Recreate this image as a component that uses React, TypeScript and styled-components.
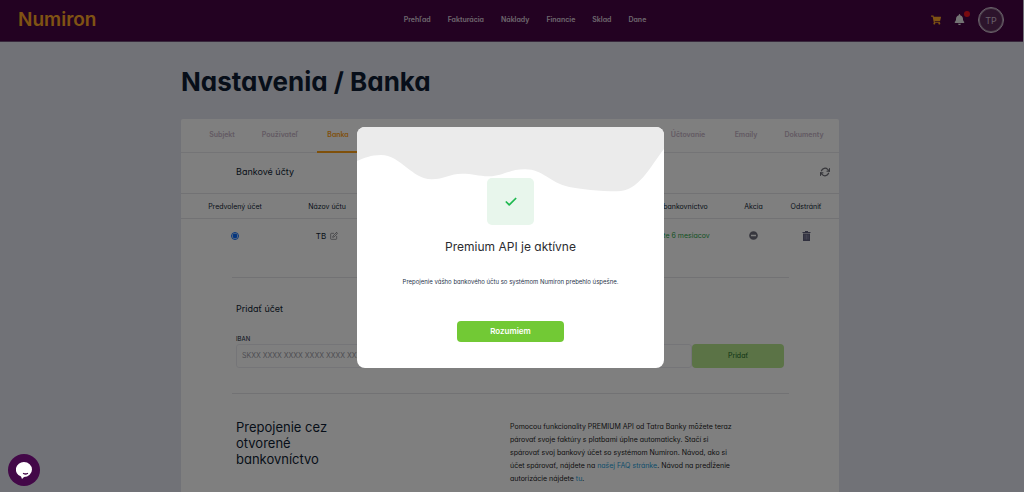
import React from "react";
import styled, { createGlobalStyle } from "styled-components";
import { FaShoppingCart, FaBell, FaMinusCircle } from "react-icons/fa";
import { FiCheck, FiRefreshCw, FiEdit } from "react-icons/fi";

const GlobalStyle = createGlobalStyle`
  *, *::before, *::after { box-sizing: border-box; }
  body {
    margin: 0;
    background: #e2e4ee;
    color: #0f1d33;
    font-family: Inter, "Liberation Sans", sans-serif;
    font-feature-settings: "cv11" 1;
    font-size: 7px;
  }
  button, input { font: inherit; font-feature-settings: inherit; color: inherit; }
  h1, h2, h3, p { margin: 0; font-weight: 400; }
  a { text-decoration: none; color: inherit; }
`;

const Page = styled.div`
  min-height: 100vh;
  display: flex;
  flex-direction: column;
`;

const Header = styled.header`
  display: grid;
  grid-template-columns: 1fr auto 1fr;
  align-items: center;
  height: 42px;
  margin-right: 1px;
  padding: 0 19px 2px 18px;
  background: #460444;
  border-bottom: 1px solid #705078;
`;

const Logo = styled.a`
  color: #ffa726;
  font-size: 19px;
  line-height: 24px;
  font-weight: 600;
`;

const Nav = styled.nav`
  display: flex;
  gap: 17px;
  margin-left: 28px;
  color: #dccfdc;
  font-weight: 600;
`;

const Tools = styled.div`
  display: flex;
  justify-content: flex-end;
  align-items: center;
  gap: 13px;
`;

const IconButton = styled.button<{ $color: string }>`
  position: relative;
  display: flex;
  padding: 0;
  border: 0;
  background: none;
  color: ${(p) => p.$color};
  font-size: 10px;
`;

const Dot = styled.span`
  position: absolute;
  top: -3px;
  right: -5px;
  width: 6px;
  height: 6px;
  border-radius: 50%;
  background: #f0141e;
`;

const Avatar = styled.button`
  width: 26px;
  height: 26px;
  padding: 2px 0 0;
  border: 1px solid #d8c8d8;
  border-radius: 50%;
  background: #5a2858;
  color: #d0bcd0;
  font-size: 9px;
  box-shadow: inset 0 0 0 1px #a088a0;
`;

const Main = styled.main`
  flex: 1;
  display: flex;
  flex-direction: column;
  width: 100%;
  max-width: 662px;
  margin: 0 auto;
  padding-right: 4px;
`;

const PageTitle = styled.h1`
  margin: 23px 0 21px;
  font-size: 26px;
  line-height: 33px;
  font-weight: 700;
`;

const Card = styled.section`
  flex: 1;
  background: #fff;
  border-radius: 2px 2px 0 0;
`;

const Tabs = styled.nav`
  display: flex;
  justify-content: space-between;
  height: 34px;
  padding: 0 6px 0 12px;
  border-bottom: 1px solid #e8e8ec;
`;

const TabGroup = styled.div`
  display: grid;
  grid-auto-flow: column;
  grid-auto-columns: 58px;
  justify-items: center;
`;

const Tab = styled.a<{ $active?: boolean }>`
  height: 34px;
  padding: 0 10px;
  border-bottom: 2px solid ${(p) => (p.$active ? "#ffa014" : "transparent")};
  color: ${(p) => (p.$active ? "#ffa014" : "#c6b4c6")};
  font-weight: 600;
  line-height: 32px;
`;

const SectionHead = styled.div`
  display: flex;
  justify-content: space-between;
  align-items: center;
  height: 40px;
  padding: 0 9px 2px 55px;
`;

const SectionTitle = styled.h2`
  font-size: 9px;
  line-height: 12px;
`;

const Table = styled.table`
  width: 100%;
  table-layout: fixed;
  border-collapse: collapse;
  text-align: center;
  th {
    height: 25px;
    padding: 0;
    border-top: 1px solid #e4e4e8;
    border-bottom: 1px solid #e4e4e8;
    font-weight: 400;
    white-space: nowrap;
  }
  td {
    height: 34px;
    padding: 0;
    white-space: nowrap;
  }
`;

const Col = styled.col<{ $share: number }>`
  width: ${(p) => p.$share}%;
`;

const Radio = styled.input`
  display: block;
  width: 8px;
  height: 8px;
  margin: 0 auto;
  accent-color: #0a6cff;
`;

const AccountName = styled.span`
  display: flex;
  justify-content: center;
  align-items: center;
  gap: 4px;
  font-size: 8px;
`;

const Status = styled.span`
  color: #1fa545;
`;

const CellButton = styled.button`
  display: flex;
  margin: 0 auto;
  padding: 0;
  border: 0;
  background: none;
  color: #70707e;
  font-size: 9px;
`;

const RowSpace = styled.div`
  height: 24px;
`;

const Divider = styled.hr`
  height: 1px;
  margin: 0 50px 0 51px;
  border: 0;
  background: #e4e4e8;
`;

const AddAccount = styled.form`
  padding: 25px 55px;
`;

const FieldLabel = styled.label`
  display: block;
  margin-top: 20px;
  font-size: 6px;
  line-height: 8px;
`;

const FieldRow = styled.div`
  display: flex;
  height: 24px;
  margin-top: 1px;
`;

const IbanInput = styled.input`
  flex: 1;
  min-width: 0;
  padding: 0 5px;
  border: 1px solid #ebebf0;
  border-radius: 3px;
  background: transparent;
  &::placeholder { color: #9c9ca6; opacity: 1; }
`;

const AddButton = styled.button`
  width: 92px;
  border: 0;
  border-radius: 4px;
  background: #b6e68c;
  color: #1b6a2a;
`;

const BankLink = styled.section`
  display: grid;
  grid-template-columns: 1fr 1fr;
  padding: 25px 55px 8px;
`;

const BankTitle = styled.h2`
  font-size: 13px;
  line-height: 16px;
`;

const BankText = styled.p`
  padding-top: 1px;
  line-height: 13px;
  color: #1c1c24;
  white-space: nowrap;
  a { color: #1a9cd8; }
`;

const Backdrop = styled.div`
  position: fixed;
  inset: 0;
  display: flex;
  align-items: center;
  justify-content: center;
  padding: 3px 3px 0 0;
  background: rgba(0, 0, 0, 0.5);
`;

const Dialog = styled.div`
  display: flex;
  flex-direction: column;
  align-items: center;
  width: 307px;
  padding-bottom: 26px;
  border-radius: 8px;
  overflow: hidden;
  background: #fff;
`;

const Wave = styled.svg`
  display: block;
  width: 100%;
  height: 65px;
  margin-bottom: -14px;
`;

const CheckTile = styled.div`
  display: flex;
  align-items: center;
  justify-content: center;
  width: 47px;
  height: 47px;
  border-radius: 5px;
  background: #e8f6ec;
`;

const DialogTitle = styled.h3`
  margin-top: 14px;
  color: #2c2c30;
  font-size: 12px;
  line-height: 16px;
`;

const DialogText = styled.p`
  margin: 23px 0 35px;
  color: #26344a;
  font-size: 6px;
  line-height: 8px;
`;

const ConfirmButton = styled.button`
  width: 107px;
  height: 21px;
  padding: 0 0 2px;
  border: 0;
  border-radius: 4px;
  background: #72c935;
  color: #fff;
  font-size: 8px;
  font-weight: 600;
`;

const ChatButton = styled.button`
  position: fixed;
  left: 8px;
  bottom: 6px;
  display: flex;
  align-items: center;
  justify-content: center;
  width: 32px;
  height: 32px;
  padding: 0;
  border: 0;
  border-radius: 50%;
  background: #430848;
`;

const TrashIcon = () => (
  <svg width="9" height="10" viewBox="0 0 18 20">
    <path fill="#60607c" d="M6 0h6v2h5v2H1V2h5zM2 5h14v15H2z" />
    <path d="M6 7v10M9 7v10M12 7v10" stroke="#a0a0b8" strokeWidth="1.200" />
  </svg>
);

export default function App() {
  return (
    <>
      <GlobalStyle />
      <Page>
        <Header>
          <Logo href="#">Numiron</Logo>
          <Nav>
            {["Prehľad", "Fakturácia", "Náklady", "Financie", "Sklad", "Dane"].map((item) => (
              <a href="#" key={item}>{item}</a>
            ))}
          </Nav>
          <Tools>
            <IconButton $color="#ffa726" aria-label="Košík"><FaShoppingCart /></IconButton>
            <IconButton $color="#e8e8e8" aria-label="Upozornenia"><FaBell size={11} /><Dot /></IconButton>
            <Avatar>TP</Avatar>
          </Tools>
        </Header>

        <Main>
          <PageTitle>Nastavenia / Banka</PageTitle>
          <Card>
            <Tabs>
              <TabGroup>
                <Tab href="#">Subjekt</Tab>
                <Tab href="#">Používateľ</Tab>
                <Tab href="#" $active>Banka</Tab>
              </TabGroup>
              <TabGroup>
                <Tab href="#">Účtovanie</Tab>
                <Tab href="#">Emaily</Tab>
                <Tab href="#">Dokumenty</Tab>
              </TabGroup>
            </Tabs>

            <SectionHead>
              <SectionTitle>Bankové účty</SectionTitle>
              <IconButton $color="#6c6c74" aria-label="Obnoviť"><FiRefreshCw strokeWidth={3} /></IconButton>
            </SectionHead>

            <Table>
              <colgroup>
                <Col $share={16.4} />
                <Col $share={11.6} />
                <Col $share={37.4} />
                <Col $share={17.6} />
                <Col $share={8} />
                <Col $share={8} />
                <Col $share={1} />
              </colgroup>
              <thead>
                <tr>
                  <th>Predvolený účet</th>
                  <th>Názov účtu</th>
                  <th />
                  <th>Otvorené bankovníctvo</th>
                  <th>Akcia</th>
                  <th>Odstrániť</th>
                  <th />
                </tr>
              </thead>
              <tbody>
                <tr>
                  <td><Radio type="radio" name="default" defaultChecked aria-label="Predvolený účet" /></td>
                  <td><AccountName>TB <FiEdit color="#6c6c74" /></AccountName></td>
                  <td />
                  <td><Status>Aktívne ešte 6 mesiacov</Status></td>
                  <td><CellButton aria-label="Akcia"><FaMinusCircle /></CellButton></td>
                  <td><CellButton aria-label="Odstrániť"><TrashIcon /></CellButton></td>
                  <td />
                </tr>
              </tbody>
            </Table>
            <RowSpace />
            <Divider />

            <AddAccount onSubmit={(e) => e.preventDefault()}>
              <SectionTitle>Pridať účet</SectionTitle>
              <FieldLabel htmlFor="iban">IBAN</FieldLabel>
              <FieldRow>
                <IbanInput id="iban" placeholder="SKXX XXXX XXXX XXXX XXXX XXXX" />
                <AddButton>Pridať</AddButton>
              </FieldRow>
            </AddAccount>
            <Divider />

            <BankLink>
              <BankTitle>Prepojenie cez<br />otvorené<br />bankovníctvo</BankTitle>
              <BankText>
                Pomocou funkcionality PREMIUM API od Tatra Banky môžete teraz<br />
                párovať svoje faktúry s platbami úplne automaticky. Stačí si<br />
                spárovať svoj bankový účet so systémom Numiron. Návod, ako si<br />
                účet spárovať, nájdete na <a href="#">našej FAQ stránke</a>. Návod na predĺženie<br />
                autorizácie nájdete <a href="#">tu</a>.
              </BankText>
            </BankLink>
          </Card>
        </Main>
      </Page>

      <Backdrop>
        <Dialog role="dialog" aria-labelledby="dialog-title">
          <Wave viewBox="0 0 308 65" preserveAspectRatio="none">
            <path
              fill="#ebebeb"
              d="M0 0H308V22C293 41 283 64 261 64.300C243 64.300 224 62 213 60C193 56 187 42 168 42.300C153 42.300 145 49.500 132 49.300C122 49 116 46.700 105 46.700C94 46.700 87 52.300 75 52.300C55 52.300 44 28 24 28C14 28 7 31 0 34Z"
            />
          </Wave>
          <CheckTile><FiCheck size={14} strokeWidth={3} color="#1fb950" /></CheckTile>
          <DialogTitle id="dialog-title">Premium API je aktívne</DialogTitle>
          <DialogText>Prepojenie vášho bankového účtu so systémom Numiron prebehlo úspešne.</DialogText>
          <ConfirmButton>Rozumiem</ConfirmButton>
        </Dialog>
      </Backdrop>

      <ChatButton aria-label="Chat">
        <svg width="16" height="17" viewBox="0 0 16 17">
          <path fill="#fff" d="M8 0a8 7.500 0 0 1 0 15l-2 2-1-2.500A8 7.500 0 0 1 8 0Z" />
          <path d="M7.500 11.500q2 1 4 0" fill="none" stroke="#430848" strokeWidth="1.300" strokeLinecap="round" />
        </svg>
      </ChatButton>
    </>
  );
}
